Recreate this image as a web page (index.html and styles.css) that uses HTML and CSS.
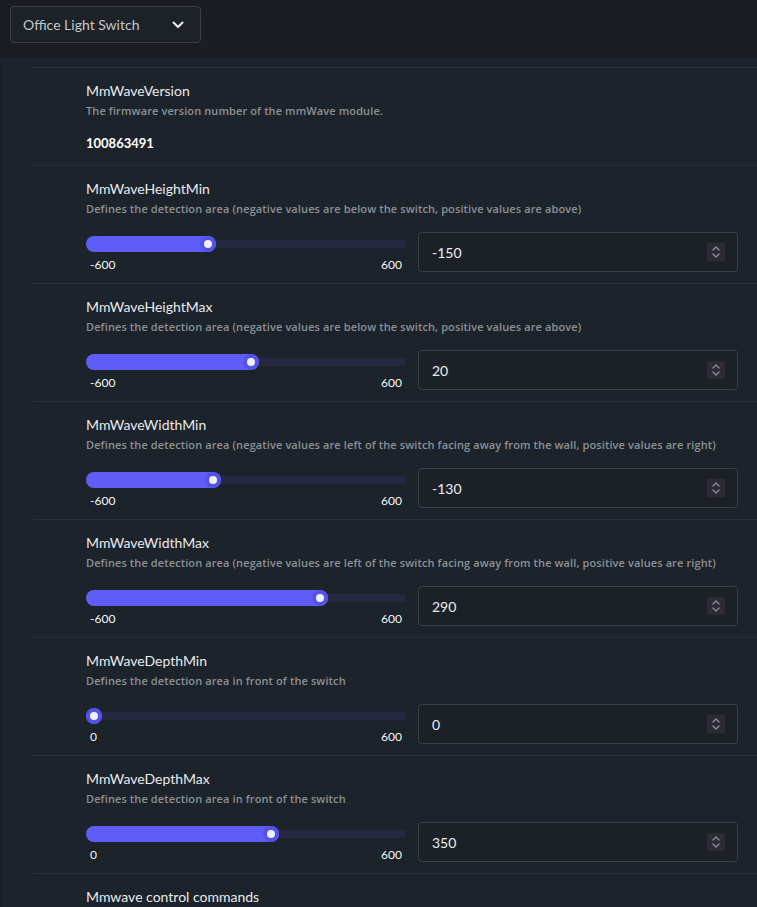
FILE: index.html
```html
<!DOCTYPE html>
<html lang="en">
<head>
<meta charset="utf-8">
<title>Office Light Switch</title>
<link rel="stylesheet" href="styles.css">
</head>
<body>
<header class="topbar">
  <div class="select">
    <span class="select-text">Office Light Switch</span>
    <svg class="chev" width="12" height="8" viewBox="0 0 12 8"><path d="M1.5 1.5 L6 6 L10.5 1.5" fill="none" stroke="#f2f2f2" stroke-width="2" stroke-linecap="round" stroke-linejoin="round"/></svg>
  </div>
</header>
<main class="content">
  <section class="row first">
    <div class="title">MmWaveVersion</div>
    <div class="desc">The firmware version number of the mmWave module.</div>
    <div class="value">100863491</div>
  </section>

  <section class="row">
    <div class="title">MmWaveHeightMin</div>
    <div class="desc">Defines the detection area (negative values are below the switch, positive values are above)</div>
    <div class="control">
      <div class="slider">
        <div class="track"><div class="fill" style="width:130px"></div><div class="thumb" style="left:114px"></div></div>
        <div class="marks"><span>-600</span><span>600</span></div>
      </div>
      <div class="num"><span>-150</span><span class="spin"><svg width="10" height="14" viewBox="0 0 10 14"><path d="M2 5 L5 2 L8 5 M2 9 L5 12 L8 9" fill="none" stroke="#8e8e99" stroke-width="1.4" stroke-linecap="round" stroke-linejoin="round"/></svg></span></div>
    </div>
  </section>

  <section class="row">
    <div class="title">MmWaveHeightMax</div>
    <div class="desc">Defines the detection area (negative values are below the switch, positive values are above)</div>
    <div class="control">
      <div class="slider">
        <div class="track"><div class="fill" style="width:173px"></div><div class="thumb" style="left:157px"></div></div>
        <div class="marks"><span>-600</span><span>600</span></div>
      </div>
      <div class="num"><span>20</span><span class="spin"><svg width="10" height="14" viewBox="0 0 10 14"><path d="M2 5 L5 2 L8 5 M2 9 L5 12 L8 9" fill="none" stroke="#8e8e99" stroke-width="1.4" stroke-linecap="round" stroke-linejoin="round"/></svg></span></div>
    </div>
  </section>

  <section class="row">
    <div class="title">MmWaveWidthMin</div>
    <div class="desc">Defines the detection area (negative values are left of the switch facing away from the wall, positive values are right)</div>
    <div class="control">
      <div class="slider">
        <div class="track"><div class="fill" style="width:135px"></div><div class="thumb" style="left:119px"></div></div>
        <div class="marks"><span>-600</span><span>600</span></div>
      </div>
      <div class="num"><span>-130</span><span class="spin"><svg width="10" height="14" viewBox="0 0 10 14"><path d="M2 5 L5 2 L8 5 M2 9 L5 12 L8 9" fill="none" stroke="#8e8e99" stroke-width="1.4" stroke-linecap="round" stroke-linejoin="round"/></svg></span></div>
    </div>
  </section>

  <section class="row">
    <div class="title">MmWaveWidthMax</div>
    <div class="desc">Defines the detection area (negative values are left of the switch facing away from the wall, positive values are right)</div>
    <div class="control">
      <div class="slider">
        <div class="track"><div class="fill" style="width:242px"></div><div class="thumb" style="left:226px"></div></div>
        <div class="marks"><span>-600</span><span>600</span></div>
      </div>
      <div class="num"><span>290</span><span class="spin"><svg width="10" height="14" viewBox="0 0 10 14"><path d="M2 5 L5 2 L8 5 M2 9 L5 12 L8 9" fill="none" stroke="#8e8e99" stroke-width="1.4" stroke-linecap="round" stroke-linejoin="round"/></svg></span></div>
    </div>
  </section>

  <section class="row">
    <div class="title">MmWaveDepthMin</div>
    <div class="desc">Defines the detection area in front of the switch</div>
    <div class="control">
      <div class="slider">
        <div class="track"><div class="fill" style="width:16px"></div><div class="thumb" style="left:0px"></div></div>
        <div class="marks"><span>0</span><span>600</span></div>
      </div>
      <div class="num"><span>0</span><span class="spin"><svg width="10" height="14" viewBox="0 0 10 14"><path d="M2 5 L5 2 L8 5 M2 9 L5 12 L8 9" fill="none" stroke="#8e8e99" stroke-width="1.4" stroke-linecap="round" stroke-linejoin="round"/></svg></span></div>
    </div>
  </section>

  <section class="row">
    <div class="title">MmWaveDepthMax</div>
    <div class="desc">Defines the detection area in front of the switch</div>
    <div class="control">
      <div class="slider">
        <div class="track"><div class="fill" style="width:193px"></div><div class="thumb" style="left:177px"></div></div>
        <div class="marks"><span>0</span><span>600</span></div>
      </div>
      <div class="num"><span>350</span><span class="spin"><svg width="10" height="14" viewBox="0 0 10 14"><path d="M2 5 L5 2 L8 5 M2 9 L5 12 L8 9" fill="none" stroke="#8e8e99" stroke-width="1.4" stroke-linecap="round" stroke-linejoin="round"/></svg></span></div>
    </div>
  </section>

  <section class="row">
    <div class="title">Mmwave control commands</div>
  </section>
</main>
</body>
</html>
```

FILE: styles.css
```css
* { box-sizing: border-box; }
html, body { margin: 0; padding: 0; }
body {
  background: #1d232a;
  font-family: "Lato", "Noto Sans", sans-serif;
  color: #e4e6e9;
  height: 907px;
  overflow: hidden;
}
.topbar {
  background: #1a1d24;
  height: 57px;
  padding: 6px 10px;
}
.select {
  width: 191px;
  height: 37px;
  border: 1px solid #3c4148;
  border-radius: 4px;
  background: #1d2128;
  display: flex;
  align-items: center;
  justify-content: space-between;
  padding: 0 16px 0 12px;
}
.select-text {
  font-size: 14px;
  color: #c3c6cb;
}
.chev { display: block; }
.content {
  padding-left: 31px;
  border-left: 2px solid #1a1e25;
  margin-top: 10px;
}
.row {
  border-top: 1px solid #2b3139;
  padding: 13px 19px 11px 53px;
}
.row.first { padding-bottom: 12px; }
.title {
  font-size: 14px;
  line-height: 20px;
  color: #e8eaed;
}
.desc {
  margin-top: 2px;
  font-family: "Open Sans", "Lato", sans-serif;
  font-size: 11px;
  line-height: 16px;
  font-weight: 600;
  letter-spacing: 0.11px;
  color: #8c9198;
}
.value {
  margin-top: 14px;
  font-size: 13px;
  line-height: 20px;
  font-weight: 700;
  color: #ffffff;
}
.control {
  margin-top: 15px;
  display: flex;
  align-items: flex-start;
  gap: 12px;
}
.slider {
  width: 320px;
  flex: none;
  padding-top: 4px;
}
.track {
  position: relative;
  height: 16px;
}
.track::before {
  content: "";
  position: absolute;
  left: 0; right: 0; top: 4px;
  height: 8px;
  border-radius: 4px;
  background: #262841;
}
.fill {
  position: absolute;
  left: 0; top: 0;
  height: 16px;
  border-radius: 8px;
  background: #5f5df7;
}
.thumb {
  position: absolute;
  top: 0;
  width: 16px;
  height: 16px;
  border-radius: 50%;
  background: #5752e6;
}
.thumb::after {
  content: "";
  position: absolute;
  left: 4px; top: 4px;
  width: 8px; height: 8px;
  border-radius: 50%;
  background: #eef0ff;
}
.marks {
  margin-top: 6px;
  display: flex;
  justify-content: space-between;
  padding: 0 4px;
  font-size: 12px;
  line-height: 14px;
  color: #f4f6f8;
}
.num {
  flex: 1;
  height: 40px;
  border: 1px solid #3b4048;
  border-radius: 4px;
  background: #1c2128;
  display: flex;
  align-items: center;
  justify-content: space-between;
  padding: 0 12px 0 13px;
  font-size: 14px;
  color: #eceef1;
}
.spin {
  width: 18px;
  height: 18px;
  background: #2c2a34;
  border-radius: 2px;
  display: flex;
  align-items: center;
  justify-content: center;
}
.spin svg { display: block; }
```
